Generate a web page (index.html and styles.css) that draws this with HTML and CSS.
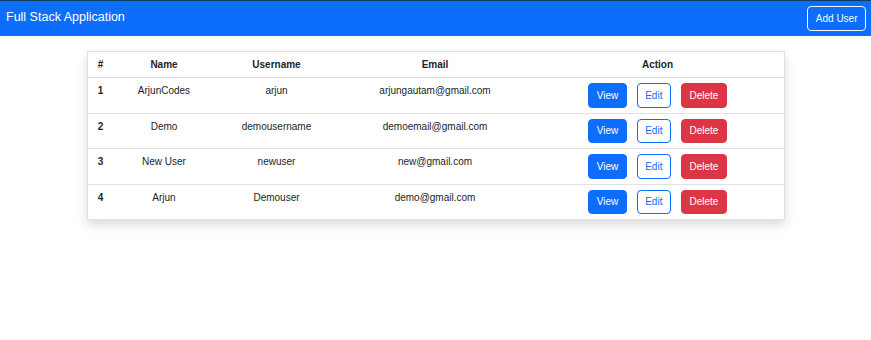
FILE: index.html
```html
<!DOCTYPE html>
<html lang="en">
<head>
  <meta charset="UTF-8">
  <meta name="viewport" content="width=device-width, initial-scale=1.0">
  <title>Full Stack Application</title>
  <link rel="stylesheet" href="styles.css">
</head>
<body>
  <nav class="navbar">
    <a class="brand" href="#">Full Stack Application</a>
    <a class="btn btn-outline-light" href="#">Add User</a>
  </nav>

  <div class="container">
    <div class="card">
      <table class="table">
        <colgroup>
          <col class="c-id">
          <col class="c-name">
          <col class="c-user">
          <col class="c-email">
          <col class="c-action">
        </colgroup>
        <thead>
          <tr>
            <th>#</th>
            <th>Name</th>
            <th>Username</th>
            <th>Email</th>
            <th>Action</th>
          </tr>
        </thead>
        <tbody>
          <tr>
            <th>1</th>
            <td>ArjunCodes</td>
            <td>arjun</td>
            <td>arjungautam@gmail.com</td>
            <td><a class="btn btn-primary" href="#">View</a><a class="btn btn-outline-primary" href="#">Edit</a><a class="btn btn-danger" href="#">Delete</a></td>
          </tr>
          <tr>
            <th>2</th>
            <td>Demo</td>
            <td>demousername</td>
            <td>demoemail@gmail.com</td>
            <td><a class="btn btn-primary" href="#">View</a><a class="btn btn-outline-primary" href="#">Edit</a><a class="btn btn-danger" href="#">Delete</a></td>
          </tr>
          <tr>
            <th>3</th>
            <td>New User</td>
            <td>newuser</td>
            <td>new@gmail.com</td>
            <td><a class="btn btn-primary" href="#">View</a><a class="btn btn-outline-primary" href="#">Edit</a><a class="btn btn-danger" href="#">Delete</a></td>
          </tr>
          <tr>
            <th>4</th>
            <td>Arjun</td>
            <td>Demouser</td>
            <td>demo@gmail.com</td>
            <td><a class="btn btn-primary" href="#">View</a><a class="btn btn-outline-primary" href="#">Edit</a><a class="btn btn-danger" href="#">Delete</a></td>
          </tr>
        </tbody>
      </table>
    </div>
  </div>
</body>
</html>
```

FILE: styles.css
```css
* {
  box-sizing: border-box;
}
body {
  margin: 0;
  font-family: 'Liberation Sans', Arial, sans-serif;
  font-size: 10px;
  line-height: 1.5;
  color: #212529;
  background: #fff;
}
a {
  text-decoration: none;
}
.navbar {
  display: flex;
  align-items: center;
  justify-content: space-between;
  height: 36px;
  padding: 5px 5px 5px 6px;
  background: #0d6efd;
  border-top: 1px solid #0b3d5e;
}
.brand {
  color: #fff;
  font-size: 12.5px;
  line-height: 18.75px;
  padding-bottom: 2px;
}
.btn {
  display: inline-block;
  padding: 3.75px 7.5px;
  border: 1px solid transparent;
  border-radius: 4px;
  font-size: 10px;
  line-height: 15px;
  margin: 0 5px;
}
.navbar .btn {
  margin: 0;
}
.btn-outline-light {
  color: #f8f9fa;
  border-color: #f8f9fa;
}
.btn-primary {
  color: #fff;
  background: #0d6efd;
  border-color: #0d6efd;
}
.btn-outline-primary {
  color: #0d6efd;
  border-color: #0d6efd;
}
.btn-danger {
  color: #fff;
  background: #dc3545;
  border-color: #dc3545;
}
.container {
  padding: 15px 0 40px;
}
.card {
  width: 698px;
  margin: 0 auto;
  background: #fff;
  border: 1px solid #dee2e6;
  box-shadow: 0 5px 10px rgba(0, 0, 0, 0.15);
}
.table {
  width: 100%;
  border-collapse: collapse;
  table-layout: fixed;
  text-align: center;
  vertical-align: top;
}
.c-id { width: 26px; }
.c-name { width: 101px; }
.c-user { width: 124px; }
.c-email { width: 193px; }
.table th,
.table td {
  padding: 5px;
  vertical-align: top;
  border-bottom: 1px solid #dee2e6;
}
.table tbody tr:last-child th,
.table tbody tr:last-child td {
  border-bottom: 0;
}
.table th {
  font-weight: bold;
}
```
